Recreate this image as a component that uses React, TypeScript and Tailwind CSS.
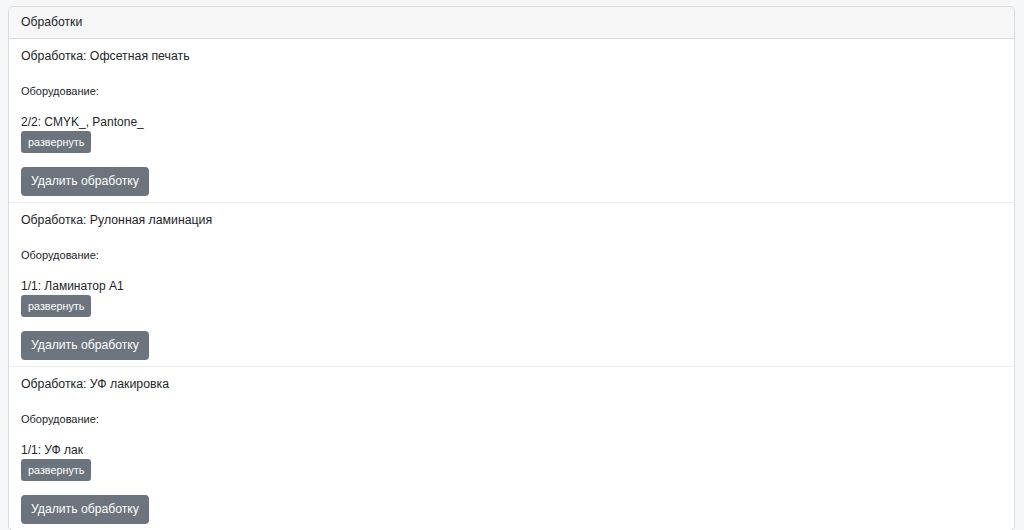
const items = [
  { name: 'Офсетная печать', equipment: '2/2: CMYK_, Pantone_' },
  { name: 'Рулонная ламинация', equipment: '1/1: Ламинатор А1' },
  { name: 'УФ лакировка', equipment: '1/1: УФ лак' },
]

export default function App() {
  return (
    <div className="min-h-[530px] bg-[#f6f7f9] pl-[8px] pr-[9px] pt-[6px] font-['Liberation_Sans',sans-serif] text-[#212529]">
      <div className="rounded-[5px] border border-[#dcdcdc] bg-white">
        <div className="h-[32px] rounded-t-[5px] border-b border-[#dcdcdc] bg-[#f7f7f7] px-3 text-[12.2px] leading-[31px]">
          Обработки
        </div>
        {items.map((it, i) => (
          <div
            key={i}
            className={`px-3 pb-[6px] pt-[7px] ${i < items.length - 1 ? 'border-b border-[#ececec]' : ''}`}
          >
            <div className="text-[12.3px] leading-[21px]">Обработка: {it.name}</div>
            <div className="mt-[15px] text-[11px] leading-[19px]">Оборудование:</div>
            <div className="mt-[12px] text-[12px] leading-[18px]">{it.equipment}</div>
            <button className="block h-[22px] rounded-[3px] bg-[#6c757d] px-[7px] text-[10.8px] leading-[22px] text-white">
              развернуть
            </button>
            <button className="mt-[14px] block h-[29px] rounded-[4px] bg-[#6c757d] px-[10px] text-[12.2px] leading-[29px] text-white">
              Удалить обработку
            </button>
          </div>
        ))}
      </div>
    </div>
  )
}
